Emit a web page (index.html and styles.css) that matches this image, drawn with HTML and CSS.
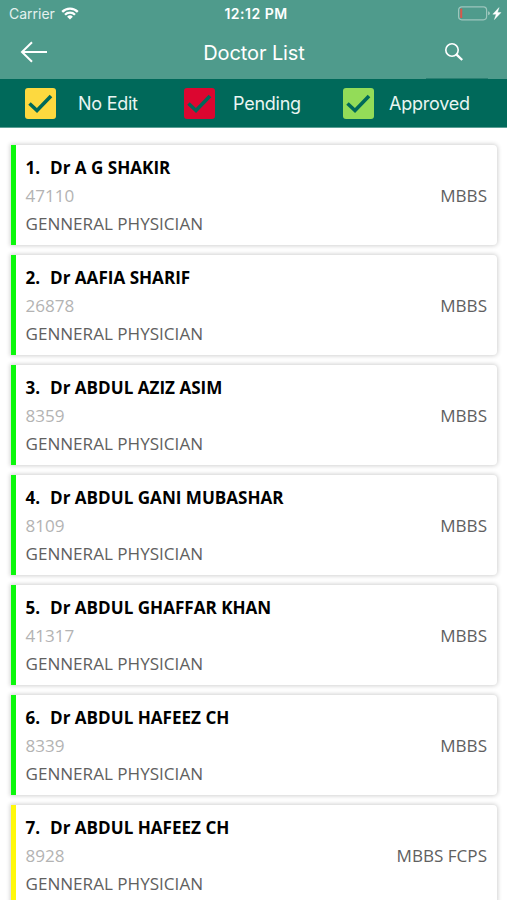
FILE: index.html
```
<!DOCTYPE html>
<html lang="en">
<head>
    <meta charset="UTF-8">
    <meta name="viewport" content="width=device-width, initial-scale=1.0">
    <title>Doctor List</title>
    <link rel="stylesheet" href="styles.css">
</head>
<body>
<header class="header">
    <div class="status-bar">
        <div class="carrier">
            <span>Carrier</span>
            <svg class="wifi" width="18" height="13" viewBox="0 0 18 13" fill="none" stroke="#fff" stroke-width="2.3">
                <path d="M1.2 4.9a11 11 0 0 1 15.6 0"/>
                <path d="M4 7.8a7 7 0 0 1 10 0"/>
                <path d="M9 12.6L6.1 9.8a4.1 4.1 0 0 1 5.8 0z" fill="#fff" stroke="none"/>
            </svg>
        </div>
        <span class="time">12:12 PM</span>
        <div class="battery">
            <svg width="45" height="15" viewBox="0 0 45 15">
                <rect x="0.6" y="0.8" width="28" height="13" rx="3.2" fill="none" stroke="#9dc6bd" stroke-width="1.2"/>
                <path d="M2.2 3.2q0-.7 .7-.7h1.3v9.6H2.9q-.7 0-.7-.7z" fill="#d8574b"/>
                <path d="M30 5.3q2 .4 2 2t-2 2z" fill="#9dc6bd"/>
                <path d="M41 1.6L34.8 8.2h3.4L36.4 13.6 43 6.6h-3.5z" fill="#fff" stroke="#fff" stroke-width=".4"/>
            </svg>
        </div>
    </div>
    <nav class="nav-bar">
        <svg class="back" width="28" height="22" viewBox="0 0 28 22" fill="none" stroke="#fff" stroke-width="2">
            <path d="M27 11H2M12 1.2L2 11l10 9.8"/>
        </svg>
        <h1>Doctor List</h1>
        <div class="search">
            <svg width="20" height="20" viewBox="0 0 20 20" fill="none" stroke="#fff">
                <circle cx="8" cy="8" r="6.2" stroke-width="1.6"/>
                <path d="M12.6 12.6l5.6 5.4" stroke-width="2.3"/>
            </svg>
        </div>
    </nav>
</header>

<div class="legend">
    <div class="legend-item">
        <svg class="check yellow" viewBox="0 0 31 31"><path d="M4.5 15.5l7.5 7L26 8"/></svg>
        <span class="no-edit">No Edit</span>
    </div>
    <div class="legend-item">
        <svg class="check red" viewBox="0 0 31 31"><path d="M4.5 15.5l7.5 7L26 8"/></svg>
        <span class="pending">Pending</span>
    </div>
    <div class="legend-item">
        <svg class="check green" viewBox="0 0 31 31"><path d="M4.5 15.5l7.5 7L26 8"/></svg>
        <span class="approved">Approved</span>
    </div>
</div>

<main class="list">
    <div class="card">
        <h2><span class="number">1.</span>Dr A G SHAKIR</h2>
        <div class="row"><span class="code">47110</span><span>MBBS</span></div>
        <p>GENNERAL PHYSICIAN</p>
    </div>
    <div class="card">
        <h2><span class="number">2.</span>Dr AAFIA SHARIF</h2>
        <div class="row"><span class="code">26878</span><span>MBBS</span></div>
        <p>GENNERAL PHYSICIAN</p>
    </div>
    <div class="card">
        <h2><span class="number">3.</span>Dr ABDUL AZIZ ASIM</h2>
        <div class="row"><span class="code">8359</span><span>MBBS</span></div>
        <p>GENNERAL PHYSICIAN</p>
    </div>
    <div class="card">
        <h2><span class="number">4.</span>Dr ABDUL GANI MUBASHAR</h2>
        <div class="row"><span class="code">8109</span><span>MBBS</span></div>
        <p>GENNERAL PHYSICIAN</p>
    </div>
    <div class="card">
        <h2><span class="number">5.</span>Dr ABDUL GHAFFAR KHAN</h2>
        <div class="row"><span class="code">41317</span><span>MBBS</span></div>
        <p>GENNERAL PHYSICIAN</p>
    </div>
    <div class="card">
        <h2><span class="number">6.</span>Dr ABDUL HAFEEZ CH</h2>
        <div class="row"><span class="code">8339</span><span>MBBS</span></div>
        <p>GENNERAL PHYSICIAN</p>
    </div>
    <div class="card locked">
        <h2><span class="number">7.</span>Dr ABDUL HAFEEZ CH</h2>
        <div class="row"><span class="code">8928</span><span>MBBS FCPS</span></div>
        <p>GENNERAL PHYSICIAN</p>
    </div>
</main>
</body>
</html>
```
FILE: styles.css
```
* {
    box-sizing: border-box;
    margin: 0;
    padding: 0;
}

body {
    height: 900px;
    overflow: hidden;
    background: #fff;
    font-family: "Open Sans", sans-serif;
}

svg {
    display: block;
}

/* Header */
.header {
    height: 79px;
    background: #4f9b8c;
    color: #fff;
    font-family: Inter, sans-serif;
}

.status-bar {
    display: grid;
    grid-template-columns: 1fr auto 1fr;
    align-items: center;
    height: 27px;
    padding: 0 4px 0 9px;
    font-size: 14px;
}

.carrier {
    display: flex;
    align-items: center;
    gap: 6px;
    color: #e4f1ee;
}

.time {
    font-size: 14px;
    font-weight: 600;
    letter-spacing: 0.5px;
}

.battery {
    justify-self: end;
}

.nav-bar {
    display: grid;
    grid-template-columns: 1fr auto 1fr;
    align-items: center;
    height: 52px;
    padding: 0 19px 0 20px;
}

.back {
    margin-bottom: 2px;
}

.nav-bar h1 {
    font-size: 20px;
    font-weight: 400;
    letter-spacing: -0.1px;
}

.search {
    justify-self: end;
    width: 62px;
    height: 52px;
    padding: 15px 0 0 18px;
    border-bottom: 1px solid #2b8072;
}

/* Status legend */
.legend {
    display: grid;
    grid-template-columns: 159px 159px 1fr;
    height: 49px;
    padding-left: 25px;
    background: #00695a;
    border-bottom: 1px solid #5b9f95;
    color: #e9f5f2;
    font-family: Inter, sans-serif;
    font-size: 18px;
    letter-spacing: -0.25px;
}

.legend-item {
    display: flex;
    align-items: center;
}

.check {
    width: 31px;
    height: 31px;
    border-radius: 3px;
    fill: none;
    stroke: #00695a;
    stroke-width: 3.6;
}

.yellow { background: #fdd93f; }
.red { background: #dc0630; }
.green { background: #93dc58; }

.no-edit { margin-left: 22px; }
.pending { margin-left: 18px; }
.approved { margin-left: 15px; }

/* Doctor cards */
.list {
    display: flex;
    flex-direction: column;
    gap: 10px;
    padding: 17px 10px 0 10.5px;
}

.card {
    flex: none;
    height: 100px;
    padding: 9px 10px 0;
    background: #fff;
    border-left: 5px solid #0bf80b;
    border-radius: 0 4px 4px 0;
    box-shadow: 0 0 4px 1px rgba(0, 0, 0, 0.18);
    color: #606060;
    font-size: 17.08px;
    line-height: 28px;
}

.card.locked {
    border-left-color: #fff80b;
}

.card h2 {
    display: flex;
    color: #000;
    font-size: 17.08px;
    font-weight: 700;
}

.number {
    width: 24.5px;
}

.row {
    display: flex;
    justify-content: space-between;
}

.code {
    color: #b3b3b3;
}
```
